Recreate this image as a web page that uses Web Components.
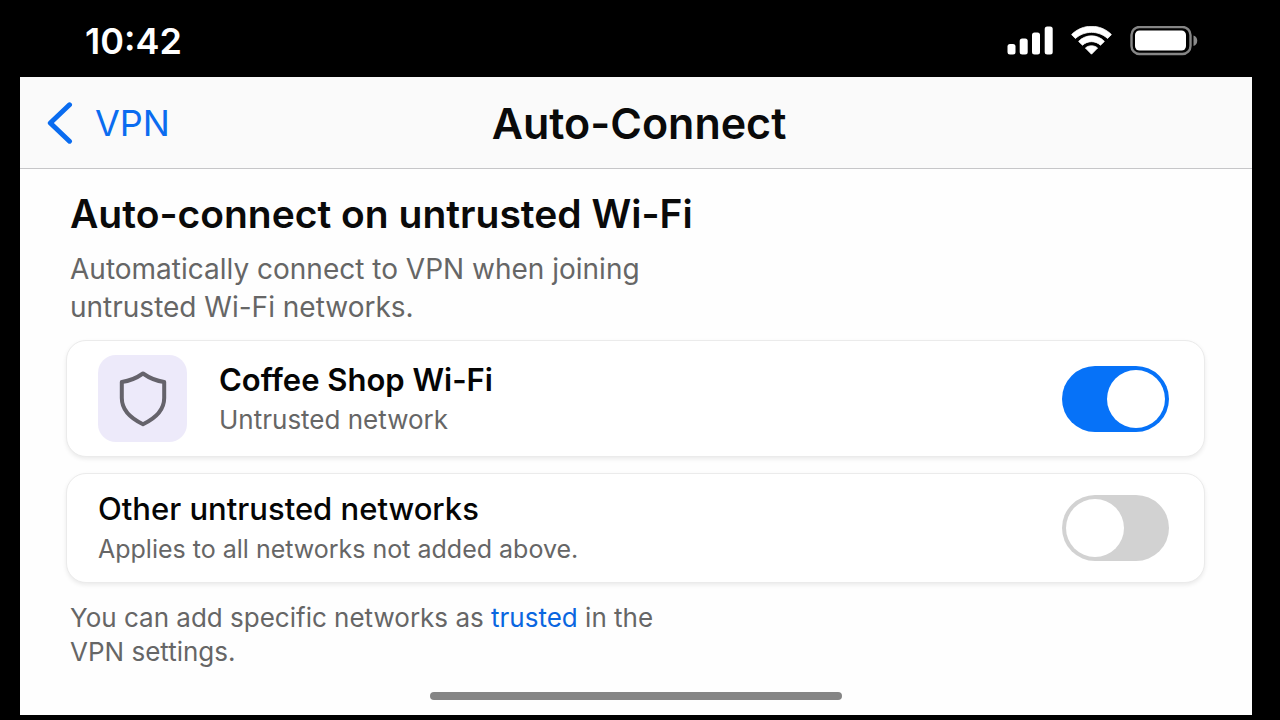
<!DOCTYPE html>
<html lang="en">
<head>
<meta charset="utf-8">
<meta name="viewport" content="width=device-width, initial-scale=1">
<title>Auto-Connect</title>
<style>
body {
  margin: 0;
  background: #000;
  font-family: Inter, "Liberation Sans", sans-serif;
}
</style>
</head>
<body>
<phone-screen>
  <status-bar slot="status" time="10:42"></status-bar>
  <nav-bar slot="nav" back="VPN">Auto-Connect</nav-bar>
  <section-intro>
    <span slot="heading">Auto-connect on untrusted Wi-Fi</span>
    Automatically connect to VPN when joining untrusted Wi-Fi networks.
  </section-intro>
  <network-row on>
    <shield-icon slot="icon"></shield-icon>
    <span slot="name">Coffee Shop Wi-Fi</span>
    <span slot="detail">Untrusted network</span>
  </network-row>
  <network-row compact>
    <span slot="name">Other untrusted networks</span>
    <span slot="detail">Applies to all networks not added above.</span>
  </network-row>
  <foot-note>You can add specific networks as <a href="#trusted">trusted</a> in the<br>VPN settings.</foot-note>
</phone-screen>

<script>
class BaseElement extends HTMLElement {
  constructor() {
    super();
    this.attachShadow({ mode: 'open' });
    this.shadowRoot.innerHTML = this.constructor.html;
  }
  getEl(sel) {
    return this.shadowRoot.querySelector(sel);
  }
}

class PhoneScreen extends BaseElement {
  static html = `
<style>
:host {
  display: flex;
  flex-direction: column;
  box-sizing: border-box;
  min-height: 100vh;
  padding: 0 28px 5px 20px;
  background: #000;
}
.sheet {
  flex: 1;
  display: flex;
  flex-direction: column;
  background: #fefefe;
}
main {
  flex: 1;
  padding: 20px 47px 20px 46px;
}
.home {
  width: 412px;
  height: 8px;
  margin: 0 auto 15px;
  border-radius: 4px;
  background: #858585;
}
</style>
<slot name="status"></slot>
<div class="sheet">
  <slot name="nav"></slot>
  <main><slot></slot></main>
  <div class="home"></div>
</div>
`;
}

class StatusBar extends BaseElement {
  static html = `
<style>
:host {
  display: flex;
  justify-content: space-between;
  align-items: center;
  height: 77px;
  padding: 4px 54px 0 65px;
  box-sizing: border-box;
  color: #fff;
}
time {
  font-size: 36px;
  font-weight: 600;
}
.icons {
  display: flex;
  align-items: center;
  gap: 18px;
}
svg {
  display: block;
}
</style>
<time></time>
<div class="icons">
  <svg width="46" height="30" viewBox="0 0 46 30" fill="#fff">
    <rect x="0.500" y="18" width="8" height="10.500" rx="2.500" />
    <rect x="12.700" y="12.500" width="8" height="16" rx="2.500" />
    <rect x="25" y="6.500" width="8" height="22" rx="2.500" />
    <rect x="37.700" y="0.500" width="8" height="28" rx="2.500" />
  </svg>
  <svg width="41" height="30" viewBox="0 0 41 30" fill="#fff">
    <path d="M.6 8.600C11.500-2.500 29.500-2.500 40.400 8.600L36.600 12.500C27.500 4.300 13.500 4.300 4.400 12.500Z" stroke="#fff" stroke-width=".8" stroke-linejoin="round" />
    <path d="M7.600 15.400C14.500 8 26.500 8 33.400 15.400L29.500 19.200C24.500 14.500 16.500 14.500 11.500 19.200Z" stroke="#fff" stroke-width=".8" stroke-linejoin="round" />
    <path d="M14.400 22C18 19 23 19 26.600 22L20.500 28.200Z" stroke="#fff" stroke-width=".8" stroke-linejoin="round" />
  </svg>
  <svg width="68" height="30" viewBox="0 0 68 30">
    <rect x="1.500" y="1" width="59" height="27" rx="8" fill="none" stroke="#868686" stroke-width="2.400" />
    <rect x="5" y="4.500" width="51" height="20" rx="4.500" fill="#fff" />
    <path d="M63.500 9.500c5 1.500 5 9 0 10.500Z" fill="#8a8a8a" />
  </svg>
</div>
`;
  connectedCallback() {
    this.getEl('time').textContent = this.getAttribute('time');
  }
}

class NavBar extends BaseElement {
  static html = `
<style>
:host {
  display: grid;
  grid-template-columns: 1fr auto 1fr;
  align-items: center;
  height: 92px;
  padding: 0 21px 0 27px;
  box-sizing: border-box;
  background: #fafafa;
  border-bottom: 1px solid #c6c6c8;
}
button {
  justify-self: start;
  display: flex;
  align-items: center;
  gap: 22px;
  padding: 0;
  border: 0;
  background: none;
  color: #0a6cf0;
  font: inherit;
  font-size: 36px;
}
h1 {
  margin: 0;
  color: #0a0a0a;
  font-size: 43px;
  font-weight: 600;
}
</style>
<button type="button">
  <svg width="26" height="42" viewBox="0 0 26 42" fill="none" stroke="currentColor" stroke-width="5" stroke-linecap="round" stroke-linejoin="round">
    <path d="M22.500 2.800L3.300 21L22.500 39.200" />
  </svg>
  <span id="back"></span>
</button>
<h1><slot></slot></h1>
`;
  connectedCallback() {
    this.getEl('#back').textContent = this.getAttribute('back');
  }
}

class SectionIntro extends BaseElement {
  static html = `
<style>
:host {
  display: block;
  padding: 0 4px 14px;
}
h2 {
  margin: 0 0 11px;
  color: #0a0a0a;
  font-size: 39px;
  font-weight: 600;
  line-height: 50px;
}
p {
  max-width: 600px;
  margin: 0;
  color: #666;
  font-size: 28px;
  line-height: 38px;
}
</style>
<h2><slot name="heading"></slot></h2>
<p><slot></slot></p>
`;
}

class ShieldIcon extends BaseElement {
  static html = `
<style>
:host {
  display: grid;
  place-items: center;
  width: 89px;
  height: 87px;
  border-radius: 18px;
  background: #edeafa;
}
</style>
<svg width="48" height="56" viewBox="0 0 48 56" fill="none" stroke="#65636b" stroke-width="4" stroke-linejoin="round">
  <path d="M24 2.500Q14 9.500 2.800 11V27C2.800 39 12 47.500 24 53.200C36 47.500 45.200 39 45.200 27V11Q34 9.500 24 2.500Z" />
</svg>
`;
}

class NetworkRow extends BaseElement {
  static html = `
<style>
:host {
  display: flex;
  align-items: center;
  gap: 32px;
  margin-bottom: 16px;
  padding: 14px 35px 14px 31px;
  border: 1px solid #ebebeb;
  border-radius: 20px;
  background: #fff;
  box-shadow: 0 2px 4px rgba(0, 0, 0, .08);
}
.text {
  flex: 1;
}
label {
  display: block;
  color: #050505;
  font-size: 31px;
  font-weight: 600;
  line-height: 42px;
}
p {
  margin: 0;
  color: #666;
  font-size: 26px;
  line-height: 38px;
}
:host([compact]) label {
  font-weight: 500;
}
:host([compact]) p {
  font-size: 25px;
}
input {
  appearance: none;
  display: flex;
  align-items: center;
  width: 107px;
  height: 66px;
  margin: 0;
  padding: 4px;
  box-sizing: border-box;
  border-radius: 33px;
  background: #d2d2d2;
}
input::before {
  content: "";
  width: 58px;
  height: 58px;
  border-radius: 50%;
  background: #fff;
}
input:checked {
  justify-content: flex-end;
  background: #0672f8;
}
</style>
<slot name="icon"></slot>
<div class="text">
  <label for="sw"><slot name="name"></slot></label>
  <p><slot name="detail"></slot></p>
</div>
<input type="checkbox" id="sw" role="switch">
`;
  connectedCallback() {
    this.getEl('#sw').checked = this.hasAttribute('on');
  }
}

class FootNote extends BaseElement {
  static html = `
<style>
:host {
  display: block;
  padding: 2px 4px;
  color: #666;
  font-size: 26px;
  line-height: 34px;
}
::slotted(a) {
  color: #0a66e0;
  text-decoration: none;
}
</style>
<slot></slot>
`;
}

customElements.define('phone-screen', PhoneScreen);
customElements.define('status-bar', StatusBar);
customElements.define('nav-bar', NavBar);
customElements.define('section-intro', SectionIntro);
customElements.define('shield-icon', ShieldIcon);
customElements.define('network-row', NetworkRow);
customElements.define('foot-note', FootNote);
</script>
</body>
</html>
